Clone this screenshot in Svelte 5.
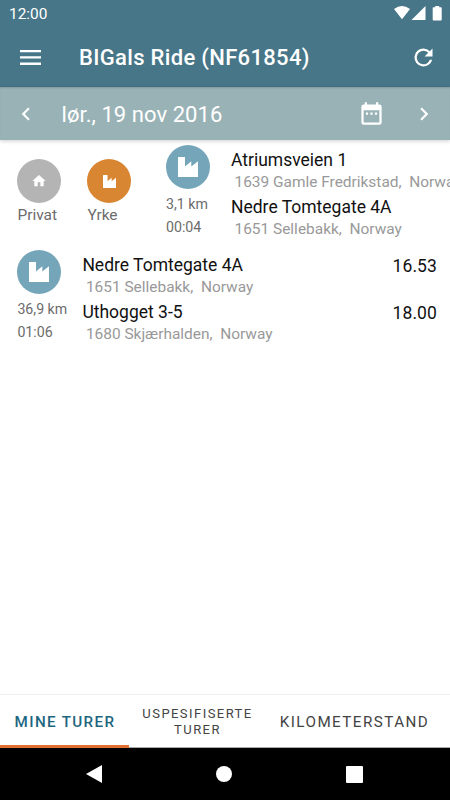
<script lang="ts">
	type Stop = { name: string; place: string; time?: string };
	type Trip = { distance: string; duration: string; stops: Stop[] };

	const factory = 'M0 0h7v9.6l6.3-5.3v5.3L20 4.3V20H0z';

	const trips: Trip[] = [
		{
			distance: '3,1 km',
			duration: '00:04',
			stops: [
				{ name: 'Atriumsveien 1', place: '1639 Gamle Fredrikstad,  Norway' },
				{ name: 'Nedre Tomtegate 4A', place: '1651 Sellebakk,  Norway' }
			]
		},
		{
			distance: '36,9 km',
			duration: '01:06',
			stops: [
				{ name: 'Nedre Tomtegate 4A', place: '1651 Sellebakk,  Norway', time: '16.53' },
				{ name: 'Uthogget 3-5', place: '1680 Skjærhalden,  Norway', time: '18.00' }
			]
		}
	];

	const tabs = ['Mine turer', 'Uspesifiserte turer', 'Kilometerstand'];
	let active = $state(0);
</script>

{#snippet trip(t: Trip)}
	<div class="trip">
		<div class="info">
			<div class="circle blue">
				<svg width="20" height="20" viewBox="0 0 20 20"><path d={factory} /></svg>
			</div>
			<span>{t.distance}</span>
			<span>{t.duration}</span>
		</div>
		<div class="stops">
			{#each t.stops as stop}
				<div class="stop">
					<div>
						<div class="name">{stop.name}</div>
						<div class="place">{stop.place}</div>
					</div>
					{#if stop.time}<div class="time">{stop.time}</div>{/if}
				</div>
			{/each}
		</div>
	</div>
{/snippet}

<div class="screen">
	<div class="status">
		<span>12:00</span>
		<svg width="53" height="16" viewBox="0 0 53 16">
			<path d="M0 3Q8-2.800 16 3L8 13.300z" />
			<path d="M31.500 0v14H17.500z" />
			<path d="M41.200 0h4v1.300h1.800q.7 0 .7.800v11.600q0 .8-.8.800h-7.400q-.8 0-.8-.8V2.100q0-.8.700-.8h1.800z" />
		</svg>
	</div>

	<header>
		<button class="menu" aria-label="Meny">
			<svg width="21" height="15" viewBox="0 0 21 15">
				<path d="M0 0h21v2.300H0zM0 6.300h21v2.300H0zM0 12.600h21v2.300H0z" />
			</svg>
		</button>
		<h1>BIGals Ride (NF61854)</h1>
		<button aria-label="Oppdater">
			<svg width="27" height="27" viewBox="0 0 24 24">
				<path d="M17.650 6.350A7.960 7.960 0 0 0 12 4a8 8 0 1 0 7.730 10h-2.080A6 6 0 1 1 12 6c1.660 0 3.140.690 4.220 1.780L13 11h7V4z" />
			</svg>
		</button>
	</header>

	<div class="date">
		<button aria-label="Forrige">
			<svg width="26" height="26" viewBox="0 0 24 24"><path d="M15.410 7.410 14 6l-6 6 6 6 1.410-1.410L10.830 12z" /></svg>
		</button>
		<span>lør., 19 nov 2016</span>
		<button class="calendar" aria-label="Kalender">
			<svg width="27" height="27" viewBox="0 0 24 24">
				<path d="M9 11H7v2h2zm4 0h-2v2h2zm4 0h-2v2h2zm2-7h-1V2h-2v2H8V2H6v2H5a2 2 0 0 0-2 2v14a2 2 0 0 0 2 2h14a2 2 0 0 0 2-2V6a2 2 0 0 0-2-2zm0 16H5V9h14z" />
			</svg>
		</button>
		<button aria-label="Neste">
			<svg width="26" height="26" viewBox="0 0 24 24"><path d="M10 6 8.590 7.410 13.170 12l-4.580 4.590L10 18l6-6z" /></svg>
		</button>
	</div>

	<main>
		<div class="swiped">
			<div class="choice">
				<div class="circle grey">
					<svg width="16" height="16" viewBox="0 0 24 24"><path d="M10 20v-6h4v6h5v-8h3L12 3 2 12h3v8z" /></svg>
				</div>
				<span>Privat</span>
			</div>
			<div class="choice">
				<div class="circle orange">
					<svg width="13" height="13" viewBox="0 0 20 20"><path d={factory} /></svg>
				</div>
				<span>Yrke</span>
			</div>
			{@render trip(trips[0])}
		</div>
		{@render trip(trips[1])}
	</main>

	<nav class="tabs">
		{#each tabs as tab, i}
			<button class:active={active === i} class:small={i === 1} onclick={() => (active = i)}>{tab}</button>
		{/each}
	</nav>

	<div class="system">
		<svg width="16" height="18" viewBox="0 0 16 18"><path d="M16 0v18L0 9z" /></svg>
		<svg width="16" height="16" viewBox="0 0 16 16"><circle cx="8" cy="8" r="8" /></svg>
		<svg width="18" height="17" viewBox="0 0 18 17"><rect width="17" height="17" rx="1" /></svg>
	</div>
</div>

<style>
	.screen {
		display: flex;
		flex-direction: column;
		width: 450px;
		height: 800px;
		overflow: hidden;
		background: #fff;
		font-family: Roboto, sans-serif;
	}

	svg {
		display: block;
		fill: #fff;
	}

	button {
		display: flex;
		margin: 0;
		padding: 0;
		border: 0;
		background: none;
		font: inherit;
	}

	.status {
		display: flex;
		justify-content: space-between;
		height: 22px;
		padding: 6px 3px 0 9px;
		background: #477688;
		color: #fff;
		font-size: 15.4px;
		line-height: 17px;
	}

	header {
		display: flex;
		align-items: center;
		height: 59px;
		padding-right: 13px;
		background: #477688;
		color: #fff;
	}

	.menu {
		padding: 0 38px 0 20px;
	}

	h1 {
		flex: 1;
		margin: 0;
		font-size: 22px;
		font-weight: 500;
		letter-spacing: 0.32px;
	}

	.date {
		display: flex;
		align-items: center;
		height: 53px;
		padding: 0 13px;
		background: #99b2b6;
		color: #fff;
		font-size: 22px;
		box-shadow: 0 1px 4px rgba(0, 0, 0, 0.2), inset 0 2px 2px -1px rgba(0, 0, 0, 0.15);
	}

	.date span {
		flex: 1;
		padding-top: 1px;
		margin-left: 22.500px;
		letter-spacing: 0.06px;
	}

	.calendar {
		margin-right: 26px;
	}

	main {
		flex: 1;
		padding: 5px 0 0 17.400px;
		color: #6c6c6c;
	}

	.swiped {
		display: flex;
		height: 105px;
	}

	.choice {
		flex: none;
		width: 70px;
		padding-top: 14px;
		font-size: 15.5px;
		line-height: 24px;
	}

	.circle {
		display: flex;
		align-items: center;
		justify-content: center;
		width: 44px;
		height: 44px;
		border-radius: 50%;
	}

	.grey {
		background: #b4b4b4;
	}

	.orange {
		background: #d98633;
	}

	.blue {
		background: #75a5b9;
	}

	.trip {
		display: flex;
		flex: 1;
		padding-right: 13px;
	}

	.swiped .trip {
		margin-left: 8.600px;
	}

	.info {
		display: flex;
		flex: none;
		flex-direction: column;
		width: 65px;
		font-size: 14.2px;
		line-height: 22.500px;
	}

	.info span:first-of-type {
		margin-top: 4px;
	}

	.stops {
		flex: 1;
		padding-top: 4px;
	}

	.stop {
		display: flex;
		justify-content: space-between;
		height: 47px;
	}

	.name,
	.time {
		color: #111;
		font-size: 17.500px;
		line-height: 22px;
	}

	.time {
		padding-top: 1px;
		letter-spacing: 0.1px;
	}

	.place {
		padding-left: 3.500px;
		color: #999;
		font-size: 15.45px;
		line-height: 22px;
		white-space: pre;
	}

	.tabs {
		display: flex;
		height: 53px;
		border-top: 1px solid #eee;
	}

	.tabs button {
		box-sizing: border-box;
		flex: none;
		align-items: center;
		justify-content: center;
		width: 129px;
		border-bottom: 1px solid #aaa;
		color: #444;
		font-size: 15.2px;
		letter-spacing: 1.45px;
		text-transform: uppercase;
	}

	.tabs .small {
		width: 137px;
		padding-top: 1px;
		font-size: 13px;
		line-height: 16px;
		letter-spacing: 1.45px;
	}

	.tabs button:last-child {
		flex: 1;
		padding: 1px 7px 0 0;
	}

	.tabs .active {
		padding: 3px 0 0 1px;
		border-bottom: 3px solid #e07033;
		color: #1d667f;
		font-weight: 500;
		letter-spacing: 1.350px;
	}

	.system {
		display: flex;
		align-items: center;
		justify-content: space-between;
		height: 52px;
		padding: 0 86px;
		background: #000;
	}
</style>
